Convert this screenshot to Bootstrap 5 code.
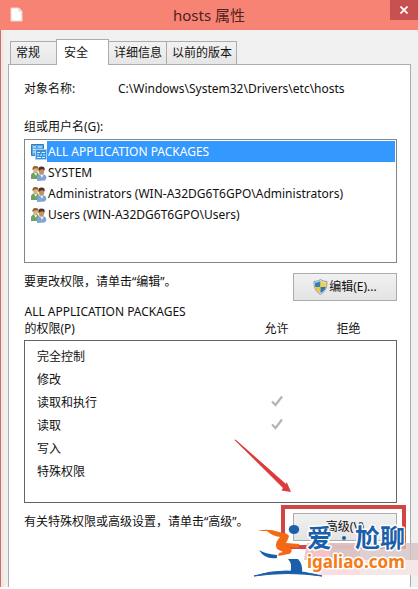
<!DOCTYPE html>
<html lang="zh-CN">
<head>
<meta charset="utf-8">
<meta name="viewport" content="width=device-width, initial-scale=1">
<title>hosts 属性</title>
<link href="https://cdn.jsdelivr.net/npm/bootstrap@5.3.0/dist/css/bootstrap.min.css" rel="stylesheet">
<style>
body{font-family:"Noto Sans","Noto Sans CJK SC",sans-serif;font-size:12px;line-height:18px;color:#111;background:#fff}
.dialog{background:#f0f0f0;border-left:1px solid #b27c6e;box-shadow:inset 3px 0 0 #fbe3df}
.titlebar{background:#f78375;height:30px;color:#4c2420;margin-left:-1px}
.titlebar h1{font-size:15px;line-height:30px}
.close-btn{width:28px;height:20px;background:#c75050;border:0}
.file-icon{left:10px;top:7px}
.tabs{height:34px;padding:0 9px}
.tab-btn{height:23px;border:1px solid #acacac;border-bottom:0;background:linear-gradient(#f2f2f2,#e6e6e6);padding:0 5px;line-height:20px;text-align:left;color:#111;white-space:nowrap}
.tab-btn + .tab-btn{border-left:0}
.tab-btn.current{height:26px;background:#fff;border-left:1px solid #acacac;padding-left:7px;position:relative;z-index:1;margin-left:-1px;margin-bottom:-1px}
.t1{width:47px}.t2{width:53px}.t3{width:58px}.t4{width:70px}
.sheet{margin:0 7px;border:1px solid #acacac;border-bottom:0;background:#fff;padding:15px 13px 46px 15px}
.object-label{width:94px}
.group-label{margin-bottom:3px}
.users{height:124px;border:1px solid #82878f;padding:1px}
.user-row{height:21px;padding:0 0 0 5px;border:0;background:none;text-align:left;color:#111}
.user-row svg{flex:none}
.user-name{line-height:21px;padding-left:1px}
.user-row.selected .user-name{background:#3399ff;color:#fff}
.edit-row{margin:10px 0 2px}
.advanced-row{padding-top:10px}
.push{width:104px;height:28px;border:1px solid #acacac;background:linear-gradient(#f1f1f1,#e4e4e4);padding:0;color:#111}
.shield{margin-right:1px}
.perms{border-collapse:collapse}
.perms th{font-weight:400;line-height:17px;padding:0 0 3px}
.perms tbody{border:1px solid #646464}
.perms tbody th{padding:0 0 0 12px;line-height:23px}
.perms td{padding:0;vertical-align:middle}
.perms td svg{display:block;margin:0 auto 3px}
.perms tbody tr:first-child > *{padding-top:4px}
.perms tbody tr:last-child > *{padding-bottom:19px}
.c-mark{width:72px}.c-end{width:12px}
.overlay{right:0;bottom:0;pointer-events:none}
</style>
<script src="https://cdn.jsdelivr.net/npm/bootstrap@5.3.0/dist/js/bootstrap.bundle.min.js"></script>
</head>
<body>
<svg class="d-none" aria-hidden="true">
  <defs>
    <symbol id="people" viewBox="0 0 16 16">
      <path d="M0 14V10Q1 7 5 7Q8 7 8 11L7 14Z" fill="#6fa064"/>
      <path d="M3 8L5 11 6 8Z" fill="#eef2dd"/>
      <ellipse cx="4.500" cy="4.500" rx="2.500" ry="3.200" fill="#e1b381"/>
      <path d="M1.500 5Q1 1 4.500 1Q8 1 7.200 4Q5 2.500 3 4Z" fill="#8a632e"/>
      <path d="M6 16V12Q7 9 11 9Q15 9 15.500 13L14 15.500Z" fill="#7fa6d2"/>
      <path d="M9 9.500L11 13 12.500 9.500Z" fill="#e8f3fb"/>
      <ellipse cx="10.500" cy="6" rx="2.700" ry="3.500" fill="#c98e5e"/>
      <path d="M7.500 6Q6.500 1.500 10.500 1.500Q14.500 1.500 13.500 5.500Q11 3.500 9 5Z" fill="#4d3427"/>
    </symbol>
    <symbol id="check" viewBox="0 0 12 12"><path d="M1 6.500L4.500 10 11 1.500" fill="none" stroke="#b4b4b4" stroke-width="2.200"/></symbol>
  </defs>
</svg>
<main class="dialog position-relative">
  <header class="titlebar position-relative d-flex justify-content-center">
    <svg class="file-icon position-absolute" width="13" height="15" viewBox="0 0 13 15" aria-hidden="true"><path d="M1 1H9L12 4V14H1Z" fill="#fff" stroke="#efd5c9"/><path d="M9 1V4H12" fill="#eee" stroke="#ddc9bf"/></svg>
    <h1 class="m-0 fw-normal">hosts 属性</h1>
    <button class="close-btn position-absolute top-0 end-0 p-0 d-flex align-items-center justify-content-center" type="button" aria-label="关闭"><svg width="8" height="8" viewBox="0 0 8 8"><path d="M.5 .5L7.500 7.500M7.500 .5L.5 7.500" stroke="#fff" stroke-width="1.700"/></svg></button>
  </header>
  <nav class="tabs d-flex align-items-end" role="tablist">
    <button class="tab-btn t1" type="button" role="tab">常规</button>
    <button class="tab-btn t2 current" type="button" role="tab" aria-selected="true">安全</button>
    <button class="tab-btn t3" type="button" role="tab">详细信息</button>
    <button class="tab-btn t4" type="button" role="tab">以前的版本</button>
  </nav>
  <section class="sheet" role="tabpanel">
    <div class="d-flex mb-3 pb-1"><span class="object-label">对象名称:</span><span>C:\Windows\System32\Drivers\etc\hosts</span></div>
    <div class="group-label" id="group-label">组或用户名(G):</div>
    <div class="users d-flex flex-column" role="listbox" aria-labelledby="group-label">
      <button type="button" role="option" aria-selected="true" class="user-row selected d-flex align-items-center"><svg width="16" height="16" viewBox="0 0 16 16" aria-hidden="true"><path d="M.5 .5H12.500V11.500H.5Z" fill="#5aa9e6" stroke="#2e7fc2"/><path d="M2 3H5M2 5.500H4M2 8H4M7 3H11" stroke="#e4f3ff"/><path d="M4.500 5.500H15.500V15.500H4.500Z" fill="#3991dc" stroke="#a8d3f5"/><path d="M6 8.500H9M10.500 8.500H14M6 11H8M9 11H11M12 11H14M6 13.500H10M11 13.500H14" stroke="#d8efff"/></svg><span class="user-name flex-grow-1">ALL APPLICATION PACKAGES</span></button>
      <button type="button" role="option" class="user-row d-flex align-items-center"><svg width="16" height="16" aria-hidden="true"><use href="#people"/></svg><span class="user-name">SYSTEM</span></button>
      <button type="button" role="option" class="user-row d-flex align-items-center"><svg width="16" height="16" aria-hidden="true"><use href="#people"/></svg><span class="user-name">Administrators (WIN-A32DG6T6GPO\Administrators)</span></button>
      <button type="button" role="option" class="user-row d-flex align-items-center"><svg width="16" height="16" aria-hidden="true"><use href="#people"/></svg><span class="user-name">Users (WIN-A32DG6T6GPO\Users)</span></button>
    </div>
    <div class="edit-row d-flex justify-content-between align-items-start">
      <span>要更改权限，请单击“编辑”。</span>
      <button class="push d-flex align-items-center justify-content-center" type="button"><svg class="shield" width="15" height="16" viewBox="0 0 15 16" aria-hidden="true"><path d="M7.500 .5Q10 2.500 14 2.500Q14.500 11.500 7.500 15.500Q.5 11.500 1 2.500Q5 2.500 7.500 .5Z" fill="#e2e6e8" stroke="#8f9ba3"/><path d="M7.500 2V8H2.200L2 3.700Q5 3.700 7.500 2Z" fill="#2f7fc4"/><path d="M7.500 2Q10 3.700 13 3.700L12.800 8H7.500Z" fill="#f4cf41"/><path d="M2.200 8H7.500V14Q3 11.500 2.200 8Z" fill="#f0c637"/><path d="M7.500 8H12.800Q12 11.500 7.500 14Z" fill="#2874b8"/></svg><span>编辑(E)...</span></button>
    </div>
    <table class="perms w-100">
      <colgroup><col><col class="c-mark"><col class="c-mark"><col class="c-end"></colgroup>
      <thead><tr><th scope="col">ALL APPLICATION PACKAGES<br>的权限(P)</th><th scope="col" class="text-center align-bottom">允许</th><th scope="col" class="text-center align-bottom">拒绝</th><th></th></tr></thead>
      <tbody>
        <tr><th scope="row">完全控制</th><td></td><td></td><td></td></tr>
        <tr><th scope="row">修改</th><td></td><td></td><td></td></tr>
        <tr><th scope="row">读取和执行</th><td><svg width="12" height="12" role="img" aria-label="允许"><use href="#check"/></svg></td><td></td><td></td></tr>
        <tr><th scope="row">读取</th><td><svg width="12" height="12" role="img" aria-label="允许"><use href="#check"/></svg></td><td></td><td></td></tr>
        <tr><th scope="row">写入</th><td></td><td></td><td></td></tr>
        <tr><th scope="row">特殊权限</th><td></td><td></td><td></td></tr>
      </tbody>
    </table>
    <div class="advanced-row d-flex justify-content-between align-items-start">
      <span>有关特殊权限或高级设置，请单击“高级”。</span>
      <button class="push" type="button">高级(V)</button>
    </div>
  </section>
  <svg class="overlay position-absolute" width="188" height="157" viewBox="230 430 188 157" aria-hidden="true">
    <path d="M234.500 440L235.500 439.500 286 484 286.700 482 291 492 281.500 490.500 283 488Z" fill="#dc3b3b"/>
    <rect x="283" y="507" width="121" height="40" fill="none" stroke="#d34542" stroke-width="4"/>
    <g>
      <path d="M307 543H360V560H304Z" fill="#f4b7b7" opacity=".85"/>
      <path d="M312 560H360V575H312Z" fill="#fbdde0"/>
      <path d="M330 543H418V560H330Z" fill="#d6c2c3" opacity=".8"/>
      <path d="M360 560H418V575H360Z" fill="#f5e6e8"/>
    </g>
    <ellipse cx="294" cy="529.500" rx="5.200" ry="4.600" fill="#195faa"/>
    <path d="M258 531Q268 528 279 532Q288 533 289 536Q288 540 286 543L299 544Q300 547 297 548Q290 548 283 545L291 548Q293 552 289 554Q283 555 278 556L279 553 283 552 277 549Q275 545 277 541L280 537Q272 536 267 531Z" fill="#f26a16"/>
    <path d="M259 550Q265 554 277 555V558Q265 560 259 550ZM288 559H298Q303 564 302 573H290Q293 564 288 559Z" fill="#195faa"/>
    <path d="M254 576Q285 566 322 576Q288 571 254 576Z" fill="#195faa" stroke="#195faa"/>
    <g stroke="#fff" stroke-width="3" paint-order="stroke" stroke-linejoin="round" font-weight="700">
      <text x="307" y="547" font-family="Noto Sans CJK SC, sans-serif" font-size="25" fill="#195faa">爱</text>
      <circle cx="344" cy="538" r="2" fill="#195faa" stroke="none"/>
      <text x="355" y="547" font-family="Noto Sans CJK SC, sans-serif" font-size="25" fill="#195faa">尬聊</text>
      <text x="307" y="568" font-family="Noto Sans, sans-serif" font-size="17" fill="#f57a18">igaliao.com</text>
    </g>
  </svg>
</main>
</body>
</html>
